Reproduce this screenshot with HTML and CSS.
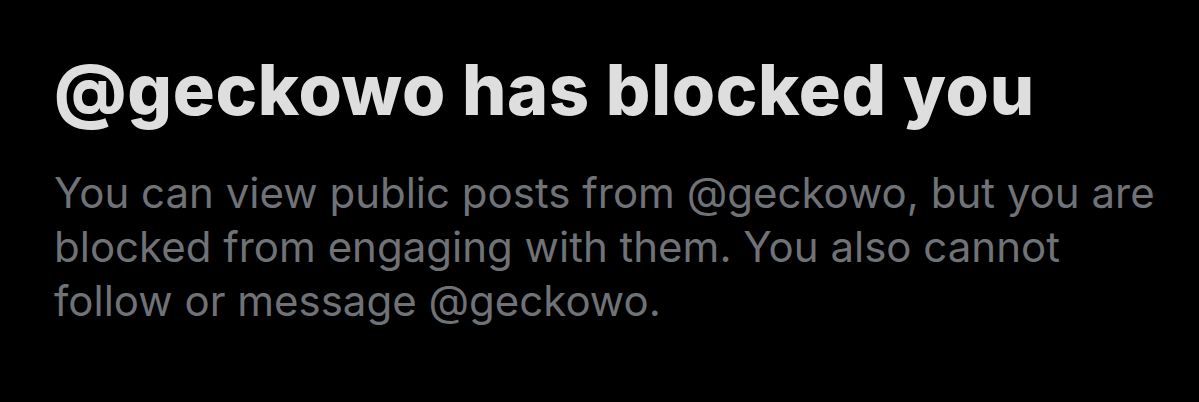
FILE: index.html
```html
<!DOCTYPE html>
<html>
<head>
<meta charset="utf-8">
<link rel="stylesheet" href="styles.css">
</head>
<body>
<div class="wrap">
  <h1 class="title">@geckowo has blocked you</h1>
  <p class="desc">You can view public posts from @geckowo, but you are blocked from engaging with them. You also cannot follow or message @geckowo.</p>
</div>
</body>
</html>
```
FILE: styles.css
```css
html, body {
  margin: 0;
  padding: 0;
  background: #000;
}
.wrap {
  padding: 48px 0 0 54px;
  width: 1125px;
}
.title {
  margin: 0;
  font-family: Inter, "Liberation Sans", sans-serif;
  font-weight: 800;
  font-size: 70px;
  line-height: 84px;
  color: #dedede;
  letter-spacing: 0.7px;
  white-space: nowrap;
}
.desc {
  margin: 34px 0 0 0;
  font-family: Inter, "Liberation Sans", sans-serif;
  font-weight: 400;
  font-size: 42px;
  line-height: 54px;
  color: #6f7276;
}
```
